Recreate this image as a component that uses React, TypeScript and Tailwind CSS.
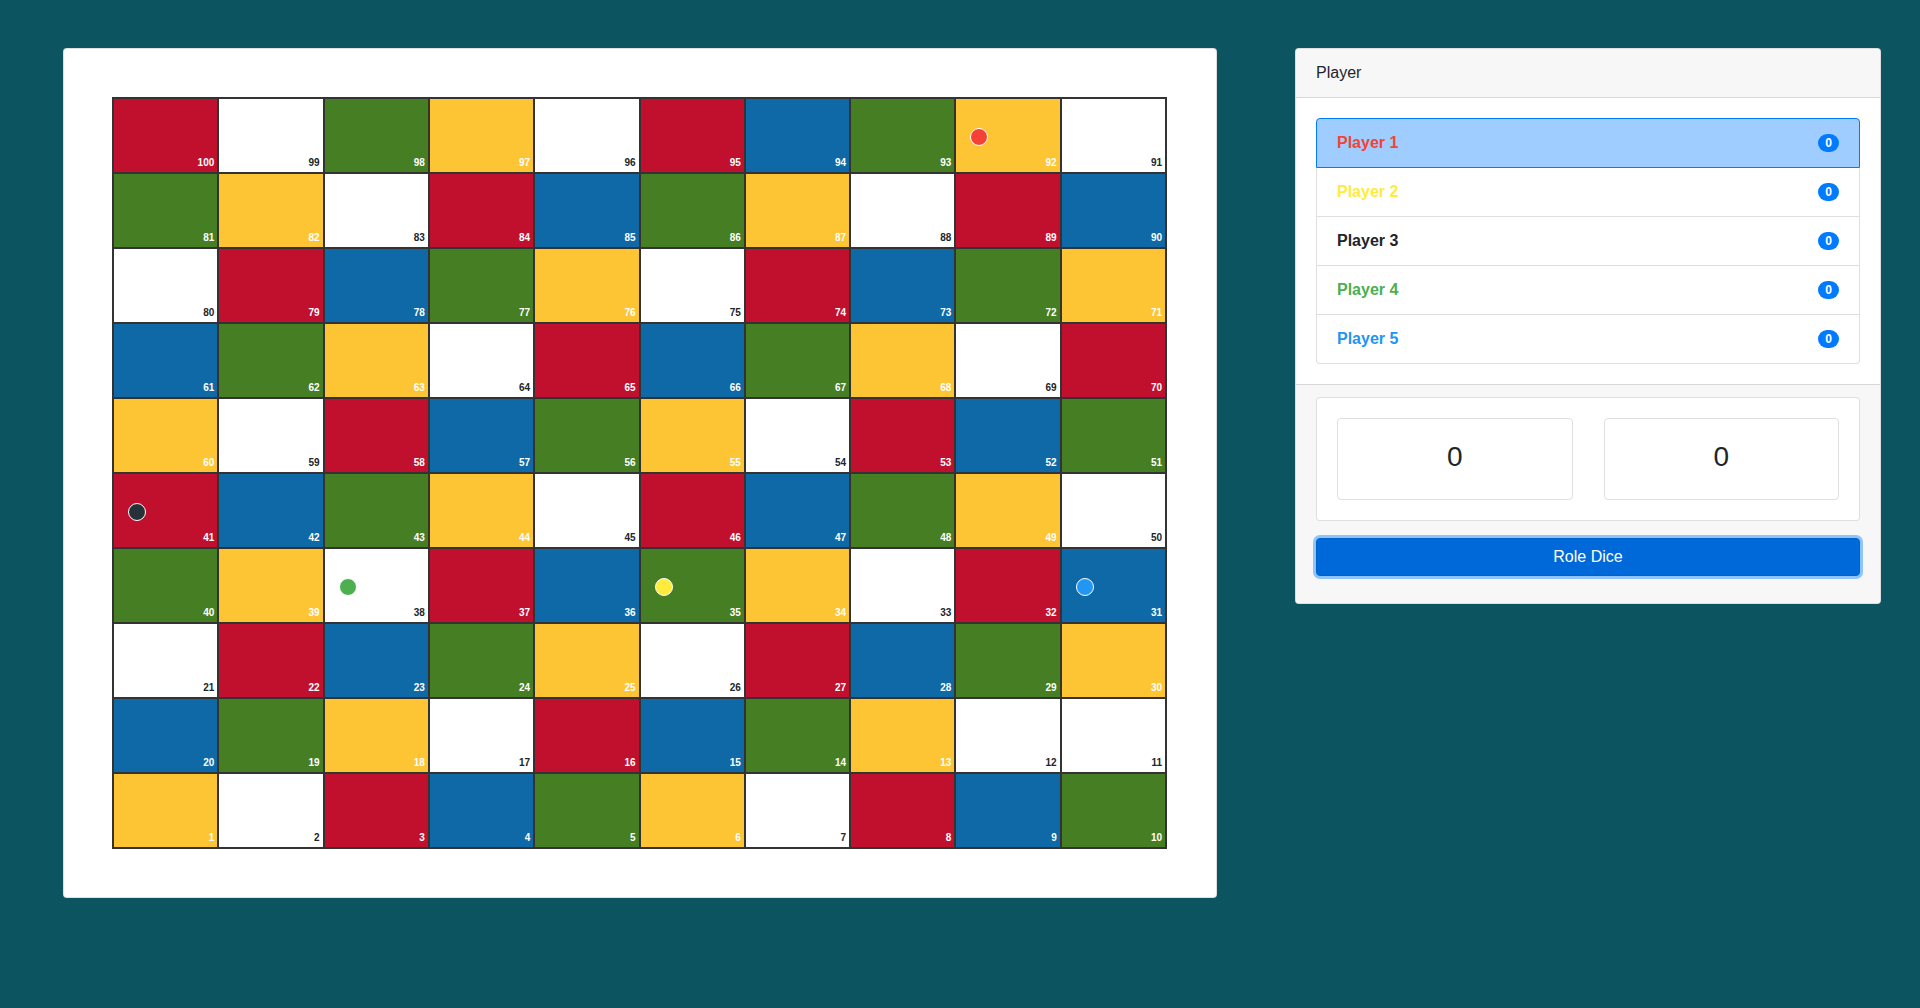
const R = 'r', W = 'w', G = 'g', Y = 'y', B = 'b';

const cellBg: Record<string, string> = {
  r: 'bg-[#c0102e] text-white',
  w: 'bg-white text-[#212529]',
  g: 'bg-[#467e24] text-white',
  y: 'bg-[#fdc433] text-white',
  b: 'bg-[#0e69a6] text-white',
};

// board rows, top to bottom
const rows: [number, string][][] = [
  [[100, R], [99, W], [98, G], [97, Y], [96, W], [95, R], [94, B], [93, G], [92, Y], [91, W]],
  [[81, G], [82, Y], [83, W], [84, R], [85, B], [86, G], [87, Y], [88, W], [89, R], [90, B]],
  [[80, W], [79, R], [78, B], [77, G], [76, Y], [75, W], [74, R], [73, B], [72, G], [71, Y]],
  [[61, B], [62, G], [63, Y], [64, W], [65, R], [66, B], [67, G], [68, Y], [69, W], [70, R]],
  [[60, Y], [59, W], [58, R], [57, B], [56, G], [55, Y], [54, W], [53, R], [52, B], [51, G]],
  [[41, R], [42, B], [43, G], [44, Y], [45, W], [46, R], [47, B], [48, G], [49, Y], [50, W]],
  [[40, G], [39, Y], [38, W], [37, R], [36, B], [35, G], [34, Y], [33, W], [32, R], [31, B]],
  [[21, W], [22, R], [23, B], [24, G], [25, Y], [26, W], [27, R], [28, B], [29, G], [30, Y]],
  [[20, B], [19, G], [18, Y], [17, W], [16, R], [15, B], [14, G], [13, Y], [12, W], [11, W]],
  [[1, Y], [2, W], [3, R], [4, B], [5, G], [6, Y], [7, W], [8, R], [9, B], [10, G]],
];

const tokens: Record<number, string> = {
  92: 'bg-[#f44336]',
  41: 'bg-[#263238]',
  38: 'bg-[#4caf50]',
  35: 'bg-[#ffeb3b]',
  31: 'bg-[#2196f3]',
};

const players = [
  { name: 'Player 1', color: 'text-[#f44336]', active: true },
  { name: 'Player 2', color: 'text-[#ffeb3b]' },
  { name: 'Player 3', color: 'text-[#212529]' },
  { name: 'Player 4', color: 'text-[#4caf50]' },
  { name: 'Player 5', color: 'text-[#2196f3]' },
];

function Board() {
  return (
    <div className="grid w-[1055px] grid-cols-10 gap-[2px] bg-[#333] p-[2px]">
      {rows.flat().map(([n, c]) => (
        <div key={n} className={`relative flex h-[73px] flex-col items-end justify-end pr-[3px] pb-[2px] ${cellBg[c]}`}>
          {tokens[n] && (
            <span className={`absolute left-[14px] top-[29px] h-[18px] w-[18px] rounded-full border border-white ${tokens[n]}`} />
          )}
          <span className="text-[10px] font-bold leading-[15px]">{n}</span>
        </div>
      ))}
    </div>
  );
}

export default function App() {
  return (
    <div
      className="flex min-h-[1008px] bg-[#0c5460] text-base text-[#212529]"
      style={{ fontFamily: '"Liberation Sans", Arial, sans-serif' }}
    >
      <div className="w-[1280px] px-[15px]">
        <div className="m-12 rounded border border-black/[.125] bg-white p-12">
          <Board />
        </div>
      </div>

      <div className="flex-1 pl-[15px] pr-[39px] pt-12">
        <div className="overflow-hidden rounded border border-black/[.125] bg-white">
          <div className="border-b border-black/[.125] bg-[#f7f7f7] px-5 py-3 leading-6">Player</div>

          <div className="p-5">
            <div className="flex flex-col">
              {players.map((p, i) => (
                <div
                  key={p.name}
                  className={`relative -mb-px flex items-center justify-between border px-5 py-3 leading-6 last:mb-0 ${
                    i === 0 ? 'rounded-t' : ''
                  } ${i === players.length - 1 ? 'rounded-b' : ''} ${
                    p.active ? 'z-10 border-[#007bff] bg-[#9fcdff]' : 'border-black/[.125] bg-white'
                  }`}
                >
                  <span className={`font-bold ${p.color}`}>{p.name}</span>
                  <span className="inline-block rounded-full bg-[#007bff] px-[0.6em] py-[0.25em] text-[12px] font-bold leading-none text-white">
                    0
                  </span>
                </div>
              ))}
            </div>
          </div>

          <div className="border-t border-black/[.125] bg-[#f7f7f7] px-5 py-3">
            <div className="rounded border border-black/[.125] bg-white p-5">
              <div className="grid grid-cols-2 gap-[31px]">
                <div className="flex h-[82px] items-center justify-center rounded border border-black/[.125] pb-[4px] text-[28px]">0</div>
                <div className="flex h-[82px] items-center justify-center rounded border border-black/[.125] pb-[4px] text-[28px]">0</div>
              </div>
            </div>
            <button className="mt-[17px] mb-[15px] block w-full rounded border border-[#0062cc] bg-[#0069d9] py-[6px] leading-6 text-white shadow-[0_0_0_3px_rgba(38,143,255,0.5)]">
              Role Dice
            </button>
          </div>
        </div>
      </div>
    </div>
  );
}
